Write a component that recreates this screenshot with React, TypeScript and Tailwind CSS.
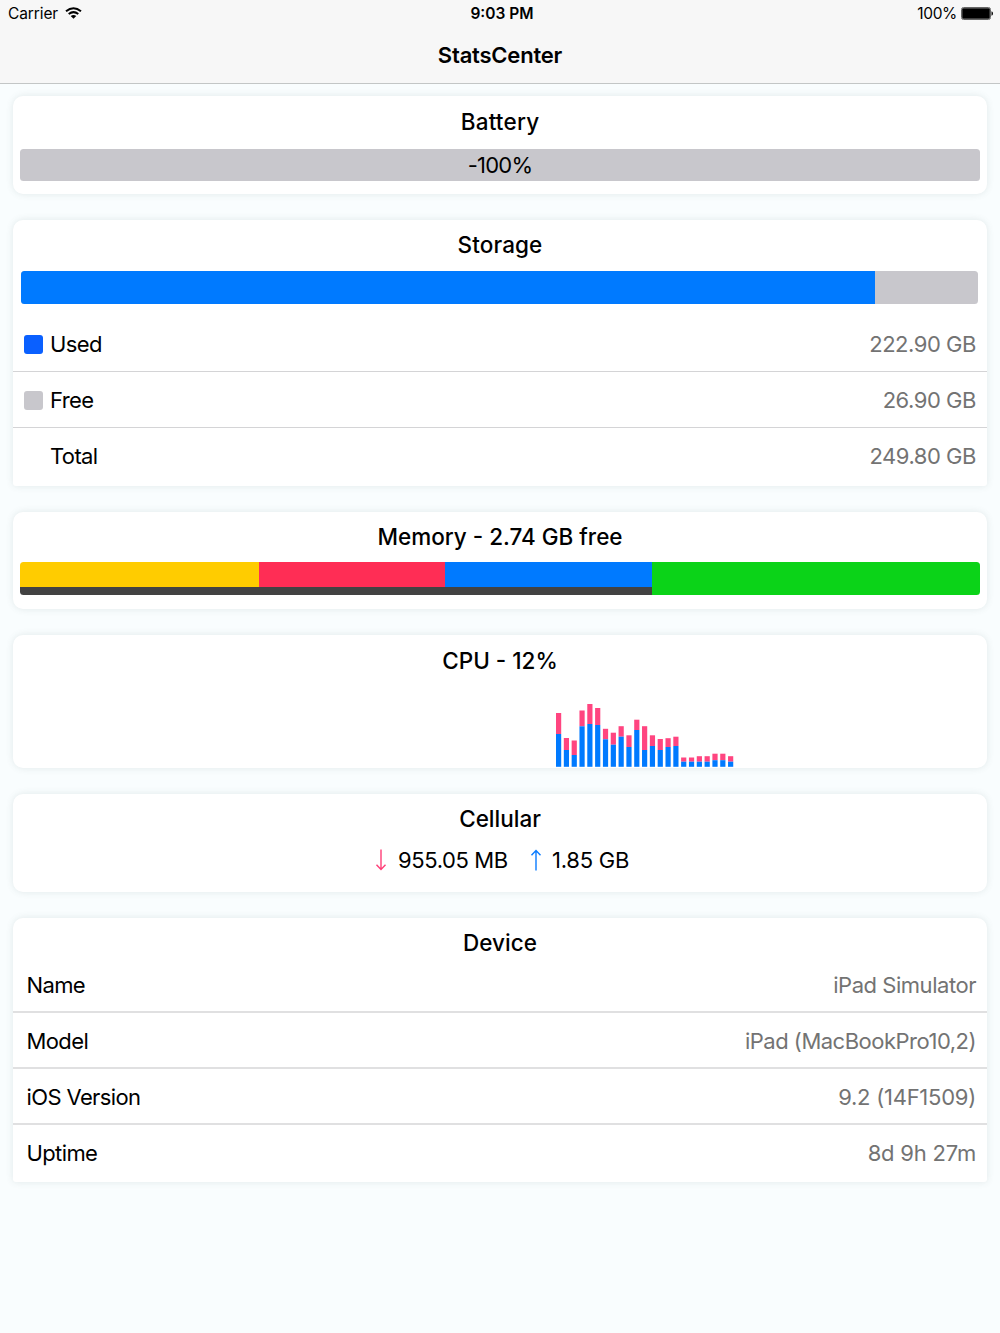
import type { ReactNode } from "react";

const CPU_SAMPLES: [number, number][] = [
  [713, 734], [738, 750], [740.5, 755], [710.5, 726.3], [704, 724], [708, 725],
  [728.8, 739.3], [732.7, 744.7], [726.2, 736.7], [735.3, 747], [719.7, 730],
  [726.2, 750], [735.3, 746], [739, 750], [738.2, 747], [736.7, 746],
  [757.5, 761.7], [757.5, 761.7], [756.2, 761.7], [756.2, 761.7],
  [753.7, 760.2], [753.7, 760.2], [756.2, 761.7],
];

function Card({ title, titleClass = "leading-[50px]", className, children }: { title: string; titleClass?: string; className: string; children: ReactNode }) {
  return (
    <section className={`flex flex-col bg-white shadow-[0_0_7px_rgba(60,90,90,0.13)] ${className}`}>
      <h2 className={`h-[52px] shrink-0 text-center text-[22.5px] font-medium ${titleClass}`}>{title}</h2>
      {children}
    </section>
  );
}

function Row({ label, value, valueClass = "tracking-[-0.46px]", swatch, rowClass = "pt-[1.5px]" }: { label: string; value: string; valueClass?: string; swatch?: string; rowClass?: string }) {
  return (
    <div className={`flex h-14 shrink-0 items-center pr-[11px] text-[22px] ${rowClass} ${swatch ? "pl-[10.5px]" : "pl-[13.5px]"}`}>
      {swatch && <span className={`mr-[7px] size-[19.5px] rounded-[3px] ${swatch}`} />}
      <span className="tracking-[-0.62px]">{label}</span>
      <span className={`ml-auto text-[#737373] ${valueClass}`}>{value}</span>
    </div>
  );
}

function Arrow({ up }: { up?: boolean }) {
  return (
    <svg width="12" height="22" viewBox="0 0 12 22" fill="none" stroke={up ? "#0a7cff" : "#ff3f78"} strokeWidth="1.4" className={up ? "" : "rotate-180"}>
      <path d="M6 21.500V1.500M1.500 6.300L6 1.500l4.500 4.800" />
    </svg>
  );
}

export default function App() {
  return (
    <div className="min-h-[1333px] w-[1000px] bg-[#f9fdfe] font-['Inter',sans-serif] text-black">
      <header className="h-[84px] border-b border-[#c3c6c6] bg-[#f7f7f7]">
        <div className="grid h-7 grid-cols-3 items-center text-[15.5px]">
          <div className="flex items-center pl-2">
            <span className="w-[50px] whitespace-nowrap tracking-[-0.1px]">Carrier</span>
            <svg className="ml-[7px] -mt-0.5" width="17" height="12" viewBox="0 0 17 12" fill="none" stroke="#000" strokeWidth="2">
              <path d="M1 4.300Q8.500-1.800 16 4.300M3.700 7Q8.500 3.200 13.300 7" />
              <path d="M5.700 9Q8.500 7 11.300 9L8.500 11.800Z" fill="#000" stroke="none" />
            </svg>
          </div>
          <div className="pl-1 text-center font-semibold">9:03 PM</div>
          <div className="flex items-center justify-end pr-[7px]">
            <span className="tracking-[-0.35px]">100%</span>
            <svg className="ml-1 -mt-px" width="32" height="13" viewBox="0 0 32 13">
              <rect x="0.500" y="0.500" width="29" height="12" rx="2" fill="#f7f7f7" stroke="#666" />
              <rect x="1.200" y="1.200" width="27.600" height="10.600" rx="1" />
              <path d="M30.500 4.200Q32 4.800 32 6.500T30.500 8.800Z" />
            </svg>
          </div>
        </div>
        <h1 className="text-center text-[22px] leading-[54px] font-semibold tracking-[-0.2px]">StatsCenter</h1>
      </header>

      <main className="flex flex-col gap-[26px] px-[13px] pt-3">
        <Card title="Battery" className="h-[98px] rounded-[10px]" titleClass="leading-[52px] tracking-[0.2px]">
          <div className="mx-[7px] mt-[0.5px] h-[32.5px] rounded-[3.5px] bg-[#c8c7cc] text-center text-[22px] leading-[33px] tracking-[-0.8px]">-100%</div>
        </Card>

        <Card title="Storage" className="h-[266px] rounded-t-[10px] rounded-b-[3px]" titleClass="leading-[50px] tracking-[0.1px]">
          <div className="-mt-px mr-[9px] ml-2 flex h-[32.5px] shrink-0 overflow-hidden rounded-[3.5px] bg-[#c8c7cc]">
            <div className="w-[854px] bg-[#007aff]" />
          </div>
          <div className="mt-[12.5px]">
            <Row label="Used" value="222.90 GB" swatch="bg-[#0a60ff]" rowClass="pt-[1.5px] border-b border-[#d4d4d6]" />
            <Row label="Free" value="26.90 GB" swatch="bg-[#c8c7cc]" rowClass="pt-[1.5px] border-b border-[#d4d4d6]" />
            <Row label="Total" value="249.80 GB" swatch="bg-transparent" />
          </div>
        </Card>

        <Card title="Memory - 2.74 GB free" className="h-[97px] rounded-[10px]">
          <div className="mx-[7px] -mt-[1.7px] flex h-[32.6px] shrink-0 overflow-hidden rounded-[3.5px]">
            <div className="flex w-[632px] flex-col">
              <div className="flex h-[25px]">
                <div className="w-[239px] bg-[#ffcc00]" />
                <div className="w-[186px] bg-[#ff2d55]" />
                <div className="flex-1 bg-[#007aff]" />
              </div>
              <div className="flex-1 bg-[#424242]" />
            </div>
            <div className="flex-1 bg-[#0bd318]" />
          </div>
        </Card>

        <Card title="CPU - 12%" className="h-[133px] rounded-[10px]" titleClass="leading-[52px]">
          <svg className="mt-[13px] ml-[543px]" width="180" height="67" viewBox="556 700 180 67">
            {CPU_SAMPLES.map(([top, split], i) => (
              <g key={i}>
                <rect x={556 + i * 7.82} y={top} width="5.200" height={split - top} fill="#ff4580" />
                <rect x={556 + i * 7.82} y={split} width="5.200" height={766.8 - split} fill="#007aff" />
              </g>
            ))}
          </svg>
        </Card>

        <Card title="Cellular" className="h-[98px] rounded-[10px]">
          <div className="-mt-[2px] flex h-8 items-center pl-[362px] text-[22px] whitespace-nowrap">
            <Arrow />
            <span className="ml-[11px] w-[110px] tracking-[-0.38px]">955.05 MB</span>
            <span className="ml-[22px] flex"><Arrow up /></span>
            <span className="ml-[10px] tracking-[-0.25px]">1.85 GB</span>
          </div>
        </Card>

        <Card title="Device" className="h-[264px] rounded-t-[10px] rounded-b-[3px]">
          <div className="-mt-[13px]">
            <Row label="Name" value="iPad Simulator" rowClass="pt-[3px] border-b-2 border-[#e0e0e1]" />
            <Row label="Model" value="iPad (MacBookPro10,2)" rowClass="pt-[3px] border-b-2 border-[#e0e0e1]" valueClass="tracking-[-0.5px]" />
            <Row label="iOS Version" value="9.2 (14F1509)" rowClass="pt-[3px] border-b-2 border-[#e0e0e1]" valueClass="tracking-[-0.25px]" />
            <Row label="Uptime" value="8d 9h 27m" rowClass="pt-[1px]" valueClass="tracking-[-0.2px]" />
          </div>
        </Card>
      </main>
    </div>
  );
}
